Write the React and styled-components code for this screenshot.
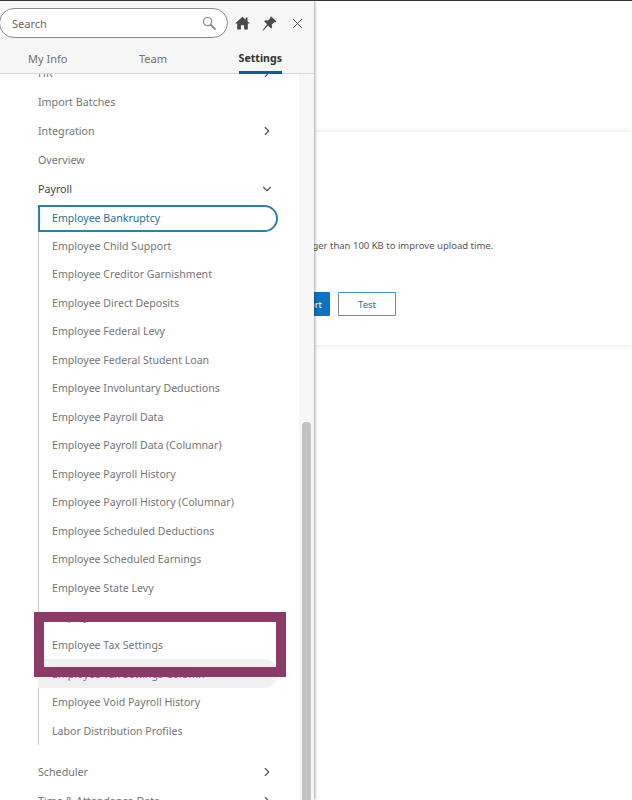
import styled, { createGlobalStyle } from "styled-components"
import { ChevronRight, ChevronDown, X } from "lucide-react"

const payrollItems = [
  "Employee Bankruptcy",
  "Employee Child Support",
  "Employee Creditor Garnishment",
  "Employee Direct Deposits",
  "Employee Federal Levy",
  "Employee Federal Student Loan",
  "Employee Involuntary Deductions",
  "Employee Payroll Data",
  "Employee Payroll Data (Columnar)",
  "Employee Payroll History",
  "Employee Payroll History (Columnar)",
  "Employee Scheduled Deductions",
  "Employee Scheduled Earnings",
  "Employee State Levy",
  "Employee Tax Credit",
  "Employee Tax Settings",
  "Employee Tax Settings Column",
  "Employee Void Payroll History",
  "Labor Distribution Profiles",
]

export default function App() {
  return (
    <Page>
      <GlobalStyle />
      <Panel>
        <Header>
          <SearchBox>
            <span>Search</span>
            <SearchIcon />
          </SearchBox>
          <HomeIcon />
          <PinIcon />
          <X size={17} strokeWidth={1.4} color="#555" />
        </Header>
        <Tabs>
          <Tab>My Info</Tab>
          <Tab>Team</Tab>
          <Tab $active>Settings</Tab>
        </Tabs>
        <Body>
          <Menu>
            <MenuRow>HR<ChevronRight size={14} strokeWidth={2} /></MenuRow>
            <MenuRow>Import Batches</MenuRow>
            <MenuRow>Integration<ChevronRight size={14} strokeWidth={2} /></MenuRow>
            <MenuRow>Overview</MenuRow>
            <MenuRow $open>Payroll<ChevronDown size={14} strokeWidth={2} /></MenuRow>
            <SubMenu>
              {payrollItems.map((item, i) => (
                <SubRow key={item} $focused={i === 0} $hovered={i === 16}>{item}</SubRow>
              ))}
            </SubMenu>
            <MenuRow>Scheduler<ChevronRight size={14} strokeWidth={2} /></MenuRow>
            <MenuRow>Time &amp; Attendance Data<ChevronRight size={14} strokeWidth={2} /></MenuRow>
          </Menu>
          <ScrollTrack>
            <ScrollThumb />
          </ScrollTrack>
        </Body>
        <Highlight />
      </Panel>
      <Main>
        <Card>
          <Note>Files should be no larger than 100 KB to improve upload time.</Note>
          <Buttons>
            <Primary>Import</Primary>
            <Outline>Test</Outline>
          </Buttons>
        </Card>
      </Main>
    </Page>
  )
}

const SearchIcon = () => (
  <svg width="14" height="14" viewBox="0 0 15 15" fill="none" stroke="#8a8a8a">
    <circle cx="6" cy="6" r="4.4" strokeWidth="1.3" />
    <path d="M9.4 9.4L14 14" strokeWidth="2" strokeLinecap="round" />
  </svg>
)

const HomeIcon = () => (
  <svg width="15" height="14" viewBox="0 0 16 15" fill="#4a4a4a">
    <path d="M8 .8L0 8h2.3v6.4h4V9.8h3.4v4.6h4V8H16L13.4 5.7V1.6h-2v2.3z" />
  </svg>
)

const PinIcon = () => (
  <svg width="15" height="15" viewBox="0 0 15 15" fill="#4a4a4a">
    <path d="M9.4.6l5 5-1.2 1-.9-.4-2.6 2.6.4 2.700-1.100 1.100-3-3-4.300 4.600-1.200.6.6-1.300L5.100 8.300l-3-3 1.100-1.100 2.700.4 2.600-2.600-.4-.9z" />
  </svg>
)

const GlobalStyle = createGlobalStyle`
  html, body {
    margin: 0;
    height: 800px;
    overflow: hidden;
    background: #fff;
  }
`

const Page = styled.div`
  display: flex;
  height: 800px;
  border-top: 1px solid #333;
  box-sizing: border-box;
  font-family: "Noto Sans", "Open Sans", sans-serif;
  overflow: hidden;
`

const Panel = styled.aside`
  position: relative;
  z-index: 2;
  flex: 0 0 314px;
  min-width: 0;
  display: flex;
  flex-direction: column;
  background: #fff;
  box-shadow: 1px 0 3px rgba(0, 0, 0, 0.35);
`

const Header = styled.div`
  display: flex;
  align-items: center;
  gap: 12px;
  height: 44px;
  box-sizing: border-box;
  padding: 0 8px 0 0;
  background: #f6f6f6;
`

const SearchBox = styled.div`
  flex: 0 0 229px;
  height: 30px;
  margin: 0 -5px 0 -1px;
  box-sizing: border-box;
  display: flex;
  align-items: center;
  justify-content: space-between;
  padding: 0 11px 0 12px;
  background: #fff;
  border: 1px solid #8c8c8c;
  border-radius: 15px;
  font-size: 11px;
  color: #666;
`

const Tabs = styled.div`
  display: flex;
  justify-content: space-between;
  height: 29px;
  box-sizing: border-box;
  padding: 0 32px 0 28px;
  background: #f6f6f6;
  border-bottom: 1px solid #d8d8d8;
`

const Tab = styled.div`
  height: 29px;
  box-sizing: border-box;
  padding-top: 6px;
  font-size: ${(p) => (p.$active ? "10.6px" : "11px")};
  font-weight: ${(p) => (p.$active ? 700 : 400)};
  color: ${(p) => (p.$active ? "#333" : "#707070")};
  border-bottom: ${(p) => (p.$active ? "3px solid #00629b" : "none")};
`

const Body = styled.div`
  flex: 1;
  min-height: 0;
  display: flex;
  overflow: hidden;
`

const Menu = styled.div`
  flex: 0 0 299px;
  box-sizing: border-box;
  margin-top: -15.5px;
  padding: 0 26px 0 38px;
  background: #fff;
`

const MenuRow = styled.div`
  height: 29px;
  display: flex;
  align-items: center;
  justify-content: space-between;
  font-size: 10.7px;
  color: ${(p) => (p.$open ? "#444" : "#757575")};
  svg {
    color: #555;
    margin-right: -1px;
  }
`

const SubMenu = styled.div`
  display: flex;
  flex-direction: column;
  margin: 1px -5px 12px 0;
  border-left: 1px solid #ccc;
`

const SubRow = styled.div`
  flex: none;
  box-sizing: border-box;
  display: flex;
  align-items: center;
  margin-left: -1px;
  font-size: 10.6px;
  height: ${(p) => (p.$focused ? "27px" : p.$hovered ? "29px" : "28.5px")};
  padding-left: ${(p) => (p.$focused ? "12px" : "14px")};
  color: ${(p) => (p.$focused ? "#2a6f8f" : p.$hovered ? "#4a86ad" : "#757575")};
  background: ${(p) => (p.$hovered ? "#f0f0f0" : "transparent")};
  border-radius: ${(p) => (p.$focused || p.$hovered ? "0 15px 15px 0" : "0")};
  border: ${(p) => (p.$focused ? "2px solid #2f7fa6" : "none")};
`

const ScrollTrack = styled.div`
  flex: 0 0 15px;
  display: flex;
  flex-direction: column;
  justify-content: flex-end;
  align-items: center;
  background: #f7f7f7;
`

const ScrollThumb = styled.div`
  width: 9px;
  height: 378px;
  background: #c2c2c2;
  border-radius: 4px 4px 0 0;
`

const Highlight = styled.div`
  position: absolute;
  left: 34px;
  top: 611px;
  width: 252px;
  height: 65px;
  box-sizing: border-box;
  border: 10px solid #8a3b66;
  pointer-events: none;
`

const Main = styled.main`
  flex: 1;
  min-width: 0;
  padding-top: 131px;
  background: #fff;
`

const Card = styled.section`
  height: 213px;
  box-sizing: border-box;
  padding: 106px 0 0 0;
  background: #fff;
  box-shadow: 0 0 6px rgba(0, 0, 0, 0.1);
`

const Note = styled.p`
  margin: 0 0 0 -96px;
  font-size: 9.5px;
  line-height: 16px;
  color: #555;
  white-space: nowrap;
`

const Buttons = styled.div`
  display: flex;
  gap: 8px;
  margin: 38px 0 0 -44px;
`

const Primary = styled.div`
  width: 60px;
  height: 24px;
  display: flex;
  align-items: center;
  justify-content: flex-end;
  padding-right: 8px;
  box-sizing: border-box;
  background: #0a74c2;
  color: #fff;
  font-size: 9.5px;
  border-radius: 1px;
`

const Outline = styled.div`
  width: 58px;
  height: 24px;
  display: flex;
  align-items: center;
  justify-content: center;
  box-sizing: border-box;
  border: 1px solid #3d9cc4;
  border-left-color: #888;
  border-bottom-color: #888;
  color: #2a6f8f;
  font-size: 9.5px;
  border-radius: 1px;
`
